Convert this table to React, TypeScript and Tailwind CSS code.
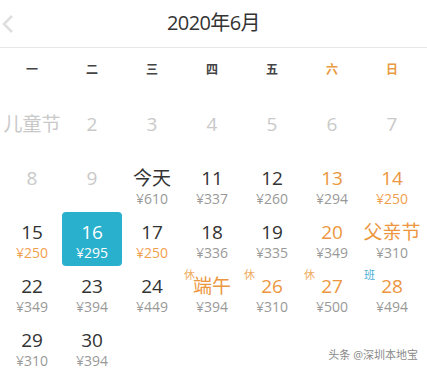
import React from 'react';

type Day = {
  label: string;
  price?: string;
  tone: 'off' | 'dark' | 'orange';
  priceTone?: 'gray' | 'orange';
  tag?: '休' | '班';
  selected?: boolean;
};

const weekdays = ['一', '二', '三', '四', '五', '六', '日'];

const days: Day[] = [
  { label: '儿童节', tone: 'off' },
  { label: '2', tone: 'off' },
  { label: '3', tone: 'off' },
  { label: '4', tone: 'off' },
  { label: '5', tone: 'off' },
  { label: '6', tone: 'off' },
  { label: '7', tone: 'off' },
  { label: '8', tone: 'off' },
  { label: '9', tone: 'off' },
  { label: '今天', price: '¥610', tone: 'dark', priceTone: 'gray' },
  { label: '11', price: '¥337', tone: 'dark', priceTone: 'gray' },
  { label: '12', price: '¥260', tone: 'dark', priceTone: 'gray' },
  { label: '13', price: '¥294', tone: 'orange', priceTone: 'gray' },
  { label: '14', price: '¥250', tone: 'orange', priceTone: 'orange' },
  { label: '15', price: '¥250', tone: 'dark', priceTone: 'orange' },
  { label: '16', price: '¥295', tone: 'dark', selected: true },
  { label: '17', price: '¥250', tone: 'dark', priceTone: 'orange' },
  { label: '18', price: '¥336', tone: 'dark', priceTone: 'gray' },
  { label: '19', price: '¥335', tone: 'dark', priceTone: 'gray' },
  { label: '20', price: '¥349', tone: 'orange', priceTone: 'gray' },
  { label: '父亲节', price: '¥310', tone: 'orange', priceTone: 'gray' },
  { label: '22', price: '¥349', tone: 'dark', priceTone: 'gray' },
  { label: '23', price: '¥394', tone: 'dark', priceTone: 'gray' },
  { label: '24', price: '¥449', tone: 'dark', priceTone: 'gray' },
  { label: '端午', price: '¥394', tone: 'orange', priceTone: 'gray', tag: '休' },
  { label: '26', price: '¥310', tone: 'orange', priceTone: 'gray', tag: '休' },
  { label: '27', price: '¥500', tone: 'orange', priceTone: 'gray', tag: '休' },
  { label: '28', price: '¥494', tone: 'orange', priceTone: 'gray', tag: '班' },
  { label: '29', price: '¥310', tone: 'dark', priceTone: 'gray' },
  { label: '30', price: '¥394', tone: 'dark', priceTone: 'gray' },
];

const labelColor = {
  off: 'text-[#c9c9c9]',
  dark: 'text-[#333333]',
  orange: 'text-[#ec9640]',
};

const DayCell: React.FC<{ day: Day }> = ({ day }) => {
  const box = day.selected ? 'bg-[#29b0cd] rounded-[4px]' : '';
  const main = day.selected ? 'text-white' : labelColor[day.tone];
  const price = day.selected
    ? 'text-white'
    : day.priceTone === 'orange'
    ? 'text-[#f0a04e]'
    : 'text-[#999999]';

  return (
    <div className={`relative h-[54px] flex flex-col items-center pt-[10px] ${box}`}>
      {day.tag && (
        <span
          className={`absolute left-[2px] top-[3px] text-[11px] leading-[12px] ${
            day.tag === '班' ? 'text-[#4fb0d6]' : 'text-[#f0ac62]'
          }`}
        >
          {day.tag}
        </span>
      )}
      <span className={`text-[19px] leading-[20px] ${main}`}>{day.label}</span>
      {day.price && (
        <span className={`mt-[3px] text-[14px] leading-[16px] ${price}`}>{day.price}</span>
      )}
    </div>
  );
};

export default function App() {
  return (
    <div
      className="relative w-[427px] h-[376px] bg-white overflow-hidden"
      style={{ fontFamily: '"Open Sans", "Noto Sans CJK SC", sans-serif' }}
    >
      <div className="relative h-[48px] flex items-center justify-center border-b border-[#e6e6e6]">
        <svg
          className="absolute left-[1px] top-[14px]"
          width="14"
          height="20"
          viewBox="0 0 14 20"
          fill="none"
        >
          <path d="M11 2 L3 10 L11 18" stroke="#dedede" strokeWidth="2.5" />
        </svg>
        <span className="text-[20px] tracking-[-0.6px] text-[#333333] mt-[-2px]">2020年6月</span>
      </div>

      <div className="grid grid-cols-7 px-[2px] w-[424px] h-[44px] items-center">
        {weekdays.map((w, i) => (
          <div
            key={w}
            className={`text-center text-[12px] font-bold ${
              i >= 5 ? 'text-[#e99a42]' : 'text-[#444444]'
            }`}
          >
            {w}
          </div>
        ))}
      </div>

      <div className="grid grid-cols-7 px-[2px] w-[424px] pt-[12px]">
        {days.map((d) => (
          <DayCell key={d.label} day={d} />
        ))}
      </div>

      <div className="absolute right-[9px] bottom-[14px] text-[11px] leading-[14px] text-[#8a8a8a]">
        头条 @深圳本地宝
      </div>
    </div>
  );
}
